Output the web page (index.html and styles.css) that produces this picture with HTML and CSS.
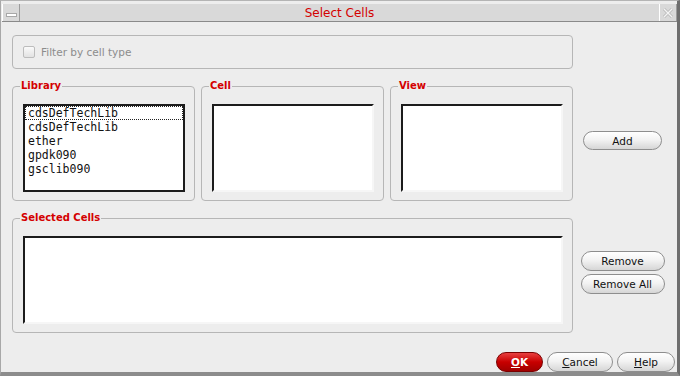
FILE: index.html
```html
<!DOCTYPE html>
<html lang="en">
<head>
    <meta charset="UTF-8">
    <title>Select Cells</title>
    <link rel="stylesheet" href="styles.css">
</head>
<body>

    <div class="window">
        <!-- Title bar -->
        <div class="titlebar">
            <div class="tb-btn"><span class="min-icon"></span></div>
            <div class="title">Select Cells</div>
            <div class="tb-btn">
                <svg width="16" height="16" viewBox="0 0 16 16">
                    <path d="M4 4 L12 12 M12 4 L4 12" stroke="#b8b8b8" stroke-width="3" fill="none"/>
                    <path d="M4 4 L12 12 M12 4 L4 12" stroke="#f4f4f4" stroke-width="1.4" fill="none"/>
                </svg>
            </div>
        </div>

        <div class="content">
            <!-- Filter -->
            <div class="row first">
                <div class="group filter">
                    <label class="check"><span class="box"></span>Filter by cell type</label>
                </div>
            </div>

            <!-- Library / Cell / View -->
            <div class="row">
                <div class="lists">
                    <fieldset class="group">
                        <legend>Library</legend>
                        <div class="listbox focused">
                            <div class="item current">cdsDefTechLib</div>
                            <div class="item">cdsDefTechLib</div>
                            <div class="item">ether</div>
                            <div class="item">gpdk090</div>
                            <div class="item">gsclib090</div>
                        </div>
                    </fieldset>
                    <fieldset class="group">
                        <legend>Cell</legend>
                        <div class="listbox"></div>
                    </fieldset>
                    <fieldset class="group">
                        <legend>View</legend>
                        <div class="listbox"></div>
                    </fieldset>
                </div>
                <div class="side">
                    <button class="btn add">Add</button>
                </div>
            </div>

            <!-- Selected cells -->
            <div class="row">
                <fieldset class="group wide">
                    <legend>Selected Cells</legend>
                    <div class="listbox"></div>
                </fieldset>
                <div class="side stack">
                    <button class="btn remove">Remove</button>
                    <button class="btn remove">Remove All</button>
                </div>
            </div>

            <!-- Dialog buttons -->
            <div class="footer">
                <button class="btn ok"><u>O</u>K</button>
                <button class="btn cancel"><u>C</u>ancel</button>
                <button class="btn help"><u>H</u>elp</button>
            </div>
        </div>
    </div>

</body>
</html>
```

FILE: styles.css
```css
body {
    margin: 0;
    font-family: "DejaVu Sans", sans-serif;
    background: #ededed;
}
.window {
    width: 680px;
    height: 376px;
    box-sizing: border-box;
    background: #ededed;
    border-top: 1px solid #b4b4b4;
    border-left: 1px solid #a8a8a8;
    border-right: 3px solid #6e6e6e;
    border-bottom: 4px solid #8c8c8c;
    padding: 3px 0 0 1px;
}
.titlebar {
    display: flex;
    height: 17px;
    background: #d9d9d9;
    border-bottom: 1px solid #8a8a8a;
}
.tb-btn {
    width: 18px;
    box-sizing: border-box;
    border-left: 1px solid #ffffff;
    border-right: 1px solid #9c9c9c;
    display: flex;
    align-items: center;
    justify-content: center;
}
.min-icon {
    display: block;
    width: 9px;
    height: 2px;
    background: #ffffff;
    border: 1px solid #a8a8a8;
    margin-top: 4px;
}
.title {
    flex: 1;
    text-align: center;
    color: #d40000;
    font-size: 12px;
    line-height: 17px;
    padding-top: 1px;
}
.content {
    padding: 0 2px 0 10px;
}
.row {
    display: flex;
    margin-top: 11px;
}
.row.first {
    margin-top: 13px;
}
.group {
    box-sizing: border-box;
    margin: 0;
    min-width: 0;
    border: 1px solid #b6b6b6;
    border-radius: 4px;
    padding: 12px 9px 8px 10px;
}
.group legend {
    color: #d40000;
    font-weight: bold;
    font-size: 10px;
    line-height: 12px;
    padding: 0 1px;
    margin-left: -3px;
}
.filter {
    width: 561px;
    height: 34px;
    padding: 10px;
}
.check {
    display: flex;
    align-items: center;
    color: #8c8c8c;
    font-size: 10.5px;
    line-height: 12px;
}
.check .box {
    width: 12px;
    height: 12px;
    box-sizing: border-box;
    border: 1px solid #bcbcbc;
    border-radius: 2px;
    background: linear-gradient(#fafafa, #e2e2e2);
    margin-right: 6px;
}
.lists {
    display: flex;
    gap: 6px;
    width: 561px;
}
.lists .group {
    width: 183px;
}
.wide {
    width: 561px;
}
.listbox {
    height: 88px;
    box-sizing: border-box;
    background: #ffffff;
    border-top: 2px solid #1c1c1c;
    border-left: 2px solid #1c1c1c;
    border-right: 2px solid #f6f6f6;
    border-bottom: 2px solid #f6f6f6;
    font-family: "DejaVu Sans Mono", monospace;
    font-size: 11.5px;
}
.listbox.focused {
    border: 2px solid #1c1c1c;
}
.item {
    line-height: 12px;
    padding: 1px 3px;
    color: #111;
}
.item.current {
    border: 1px dotted #222;
    padding: 0 2px;
}
.side {
    flex: 1;
    display: flex;
    align-items: center;
    justify-content: center;
    padding-right: 3px;
}
.side.stack {
    flex-direction: column;
    gap: 3px;
}
.btn {
    box-sizing: border-box;
    height: 20px;
    padding: 0;
    font-family: "DejaVu Sans", sans-serif;
    font-size: 10.5px;
    color: #111;
    border: 1px solid #8e8e8e;
    border-radius: 10px;
    background: linear-gradient(#ffffff, #f3f3f3 45%, #d6d6d6);
}
.btn u {
    text-decoration-thickness: 1px;
}
.add {
    width: 79px;
    height: 19px;
}
.remove {
    width: 84px;
}
.footer {
    display: flex;
    justify-content: flex-end;
    gap: 4px;
    margin-top: 19px;
}
.ok {
    width: 47px;
    color: #ffffff;
    font-weight: bold;
    border-color: #7a0000;
    background: linear-gradient(#e84040, #c80000 50%, #a00000);
}
.cancel {
    width: 66px;
}
.help {
    width: 58px;
}
```
